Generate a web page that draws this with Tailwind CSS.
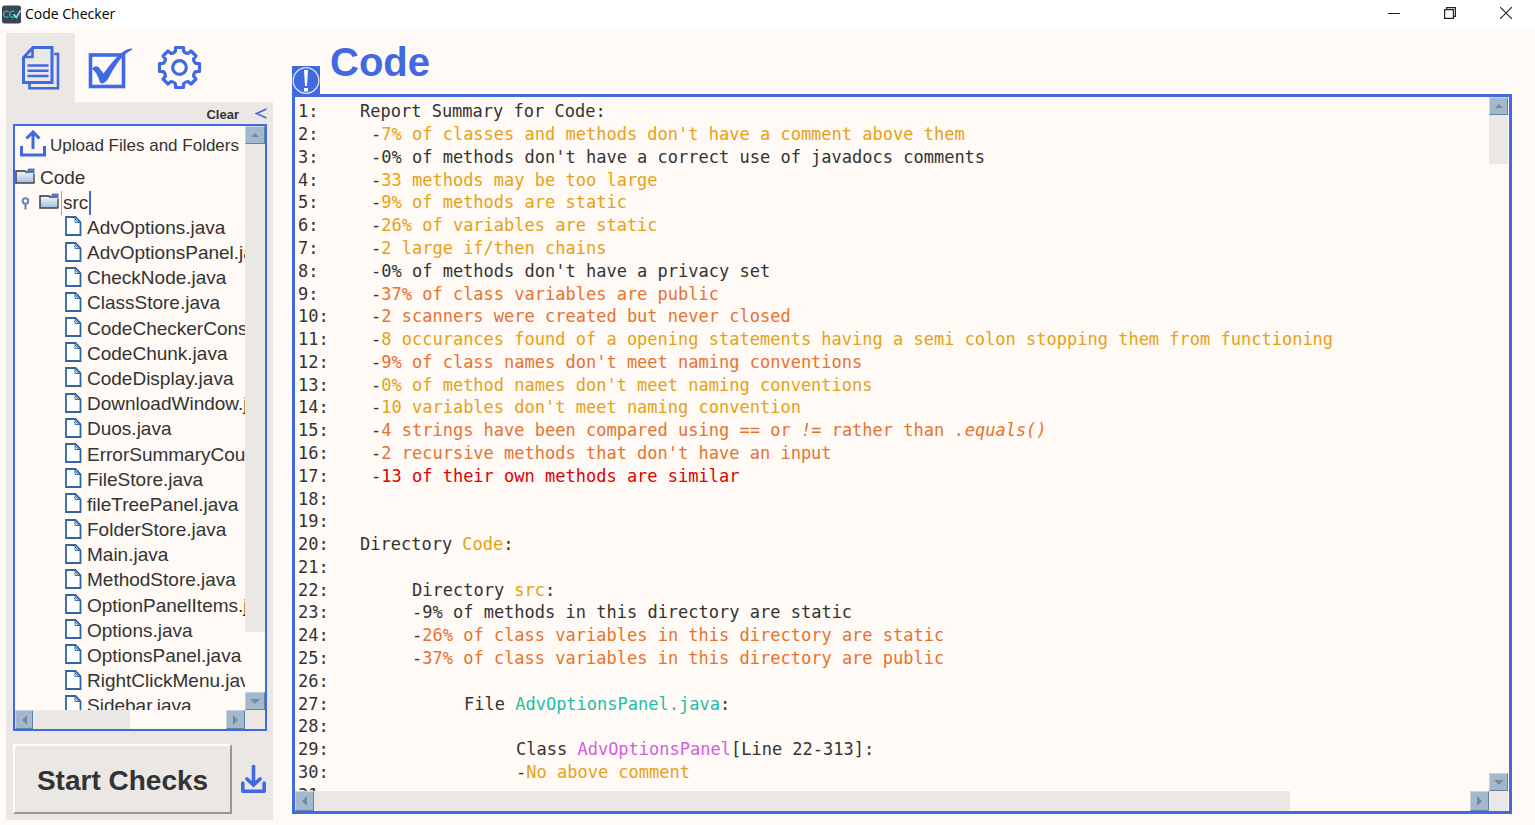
<!DOCTYPE html>
<html lang="en">
<head>
<meta charset="utf-8">
<title>Code Checker</title>
<script src="https://cdn.jsdelivr.net/npm/@tailwindcss/browser@4"></script>
</head>
<body class="h-screen flex flex-col overflow-hidden bg-[#fffaf5] text-[#333] font-['Liberation_Sans',Arial,sans-serif]">

<svg class="absolute size-0" aria-hidden="true">
  <defs>
    <linearGradient id="fold" x1="0" y1="0" x2="0" y2="1"><stop offset="0" stop-color="#f4f8fc"/><stop offset="1" stop-color="#a0bfe0"/></linearGradient>
    <symbol id="folder" viewBox="0 0 20 17">
      <path d="M1 3.500H10L12 5.500H18.500V15.500H1Z" fill="url(#fold)"/>
      <path d="M1 16V3.500H10L12 5.500" fill="none" stroke="#333" stroke-width="1.400"/>
      <path d="M.5 15.500H19M19 6V16" fill="none" stroke="#444" stroke-width="1.400"/>
      <path d="M11 4.500L13.500 1H19.500V5.500H11.500Z" fill="#5577b5"/>
    </symbol>
    <symbol id="file" viewBox="0 0 17 20">
      <path d="M1 1H10.500L15.500 6.500V19H1Z" fill="#fff" stroke="#2d66a3" stroke-width="1.800"/>
      <path d="M10 1V6.500H15.500M10 3L14 7M11 1L16 6" fill="none" stroke="#2d66a3" stroke-width=".9"/>
    </symbol>
  </defs>
</svg>

<header class="h-7 shrink-0 flex items-center bg-white text-black">
  <svg class="ml-[2px] size-[19px]" viewBox="0 0 19 19" fill="none">
    <rect width="19" height="18" y=".5" rx="2.500" fill="#3b4654"/>
    <path d="M6.500 6.800C4.500 5.300 1.500 6.500 1.500 9.200S4.500 13 6.500 11.700M12.500 6.500C10 5.300 7.500 6.800 7.500 9.200S10 13 12.300 12V9.500H10.500" stroke="#2bc4c4" stroke-width="1.200"/>
    <path d="M12 9.500L14.300 12.500L18.500 5.500" stroke="#7fe6ea" stroke-width="1.600"/>
  </svg>
  <h1 class="ml-1 text-sm font-['Open_Sans','Noto_Sans',sans-serif]">Code Checker</h1>
  <div class="ml-auto flex items-center gap-11 pr-[23px] pb-[2px]">
    <button aria-label="Minimize" class="size-3"><svg viewBox="0 0 12 12"><path d="M0 6.500H12" stroke="#222"/></svg></button>
    <button aria-label="Restore" class="size-3"><svg viewBox="0 0 12 12" fill="none" stroke="#222" stroke-width="1.200"><path d="M.6 2.600H9.400V11.400H.6ZM2.600 2.600V.6H11.400V9.400H9.400"/></svg></button>
    <button aria-label="Close" class="size-3"><svg viewBox="0 0 12 12"><path d="M0 0L12 12M12 0L0 12" stroke="#222" stroke-width="1.100"/></svg></button>
  </div>
</header>

<div class="flex-1 min-h-0 flex pt-[5px]">

  <aside class="ml-[6px] mb-[5px] w-[267px] shrink-0 flex flex-col">
    <nav class="h-[69px] shrink-0 flex">
      <button aria-label="Files" class="w-[69px] flex items-center justify-center bg-[#ebe7e4]">
        <svg class="w-[38px] h-[44px]" viewBox="0 0 38 44" fill="none" stroke="#4169e1">
          <path d="M11 1.500H30V36.500H1.500V11.500Z" stroke-width="3"/>
          <path d="M10.500 2V11H2" stroke-width="2.600"/>
          <path d="M32 8H36V42.200H7.500V38" stroke-width="2.600"/>
          <path d="M5.500 19.500H26.500M5.500 24.800H26.500M5.500 30H26.500" stroke-width="2.600"/>
        </svg>
      </button>
      <button aria-label="Checks" class="w-[69px] flex items-center justify-center">
        <svg class="w-[44px] h-[42px]" viewBox="0 0 44 42">
          <rect x="2.500" y="8" width="33" height="31.500" fill="none" stroke="#4169e1" stroke-width="3.600"/>
          <path d="M4 22Q7 17.500 11 20.500L15.500 26.500Q25 13 34 5.500Q39 1.500 44 1.500V2.800Q37 6 31 14Q25 22 20 32Q15 38.500 12 35.500Q9 25 4 22Z" fill="#4169e1"/>
        </svg>
      </button>
      <button aria-label="Settings" class="w-[71px] shrink-0 flex items-center justify-center">
        <svg class="size-[45px]" viewBox="-22.500 -22.500 45 45" fill="none" stroke="#4169e1" stroke-width="3.200" stroke-linejoin="round">
          <path d="M-4 -20H4V-16.500Q5 -14.500 8.500 -14L11.500 -16.500L16.500 -11.500L14 -8.500Q14.500 -5 16.500 -4H20V4H16.500Q14.500 5 14 8.500L16.500 11.500L11.500 16.500L8.500 14Q5 14.500 4 16.500V20H-4V16.500Q-5 14.500 -8.500 14L-11.500 16.500L-16.500 11.500L-14 8.500Q-14.500 5 -16.500 4H-20V-4H-16.500Q-14.500 -5 -14 -8.500L-16.500 -11.500L-11.500 -16.500L-8.500 -14Q-5 -14.500 -4 -16.500Z"/>
          <circle r="6.800"/>
        </svg>
      </button>
    </nav>

    <div class="flex-1 min-h-0 flex flex-col bg-[#ebe7e4] pl-[7px] pr-[6px] pb-[6px]">
      <div class="h-[22px] shrink-0 flex items-center justify-end gap-4">
        <button class="pt-1 text-[13px] font-bold">Clear</button>
        <button aria-label="Collapse" class="w-3"><svg viewBox="0 0 12 11"><path d="M11.500 1L1.500 5.500L11.500 10" fill="none" stroke="#4169e1" stroke-width="1.600"/></svg></button>
      </div>

      <div class="flex-1 min-h-0 grid grid-cols-[1fr_20px] grid-rows-[1fr_19px] border-2 border-[#4169e1] bg-[#fffaf5]">
        <div class="min-w-0 min-h-0 overflow-hidden">
          <button class="h-[39px] w-full flex items-center gap-1 pl-[5px] text-[17px] whitespace-nowrap">
            <svg class="w-[26px] h-[27px] shrink-0 -mt-1" viewBox="0 0 26 27" fill="none" stroke="#4169e1" stroke-width="3"><path d="M1.500 16V25H24.500V16M13 19V3M6.500 8.500L13 2L19.500 8.500"/></svg>
            Upload Files and Folders
          </button>
          <ul class="h-[554px] grid auto-rows-fr text-[19px] whitespace-nowrap *:flex *:items-center *:gap-[5px] *:min-h-0 *:leading-6 *:pl-[50px] [&_svg]:shrink-0 [&_svg]:self-start [&_svg]:mt-px">
            <li class="!pl-0"><svg class="w-5 h-5"><use href="#folder"/></svg>Code</li>
            <li class="!pl-[6px] !gap-0"><svg class="w-[9px] h-6 mr-[9px]" viewBox="0 0 9 12" fill="none" stroke="#6382bf" stroke-width="2"><circle cx="4.500" cy="4" r="2.800"/><path d="M4.500 7V12.500"/></svg><svg class="w-5 h-5 mr-[2px]"><use href="#folder"/></svg><span class="border-l border-r-2 border-l-[#8fa6ec] border-r-[#4169e1] px-px">src</span></li>
            <li><svg class="w-[17px] h-5"><use href="#file"/></svg>AdvOptions.java</li>
            <li><svg class="w-[17px] h-5"><use href="#file"/></svg>AdvOptionsPanel.java</li>
            <li><svg class="w-[17px] h-5"><use href="#file"/></svg>CheckNode.java</li>
            <li><svg class="w-[17px] h-5"><use href="#file"/></svg>ClassStore.java</li>
            <li><svg class="w-[17px] h-5"><use href="#file"/></svg>CodeCheckerConstants.java</li>
            <li><svg class="w-[17px] h-5"><use href="#file"/></svg>CodeChunk.java</li>
            <li><svg class="w-[17px] h-5"><use href="#file"/></svg>CodeDisplay.java</li>
            <li><svg class="w-[17px] h-5"><use href="#file"/></svg>DownloadWindow.java</li>
            <li><svg class="w-[17px] h-5"><use href="#file"/></svg>Duos.java</li>
            <li><svg class="w-[17px] h-5"><use href="#file"/></svg>ErrorSummaryCount.java</li>
            <li><svg class="w-[17px] h-5"><use href="#file"/></svg>FileStore.java</li>
            <li><svg class="w-[17px] h-5"><use href="#file"/></svg>fileTreePanel.java</li>
            <li><svg class="w-[17px] h-5"><use href="#file"/></svg>FolderStore.java</li>
            <li><svg class="w-[17px] h-5"><use href="#file"/></svg>Main.java</li>
            <li><svg class="w-[17px] h-5"><use href="#file"/></svg>MethodStore.java</li>
            <li><svg class="w-[17px] h-5"><use href="#file"/></svg>OptionPanelItems.java</li>
            <li><svg class="w-[17px] h-5"><use href="#file"/></svg>Options.java</li>
            <li><svg class="w-[17px] h-5"><use href="#file"/></svg>OptionsPanel.java</li>
            <li><svg class="w-[17px] h-5"><use href="#file"/></svg>RightClickMenu.java</li>
            <li><svg class="w-[17px] h-5"><use href="#file"/></svg>Sidebar.java</li>
          </ul>
        </div>
        <div class="flex flex-col">
          <button aria-label="Scroll up" class="h-[18px] flex items-center justify-center bg-[#a3b8cc] border border-t-[#c5d4e2] border-l-[#c5d4e2] border-r-[#6382a8] border-b-[#6382a8]"><svg class="w-2" viewBox="0 0 8 4"><path d="M0 4L4 0L8 4Z" fill="#75899c"/></svg></button>
          <div class="h-[488px] bg-[#ebe7e4]"></div>
          <button aria-label="Scroll down" class="mt-auto h-[18px] flex items-center justify-center bg-[#a3b8cc] border border-t-[#c5d4e2] border-l-[#c5d4e2] border-r-[#6382a8] border-b-[#6382a8]"><svg class="w-[10px]" viewBox="0 0 10 5"><path d="M0 0L5 5L10 0Z" fill="#75899c"/></svg></button>
        </div>
        <div class="flex">
          <button aria-label="Scroll left" class="w-[18px] flex items-center justify-center bg-[#a3b8cc] border border-t-[#c5d4e2] border-l-[#c5d4e2] border-r-[#6382a8] border-b-[#6382a8]"><svg class="w-[5px]" viewBox="0 0 5 10"><path d="M5 0L0 5L5 10Z" fill="#75899c"/></svg></button>
          <div class="w-[97px] bg-[#ebe7e4]"></div>
          <button aria-label="Scroll right" class="ml-auto w-[19px] flex items-center justify-center bg-[#a3b8cc] border border-t-[#c5d4e2] border-l-[#c5d4e2] border-r-[#6382a8] border-b-[#6382a8]"><svg class="w-[5px]" viewBox="0 0 5 10"><path d="M0 0L5 5L0 10Z" fill="#75899c"/></svg></button>
        </div>
        <div class="bg-[#ebe7e4]"></div>
      </div>

      <div class="mt-[13px] h-[70px] shrink-0 flex items-center gap-[9px]">
        <button class="w-[219px] h-full border-2 border-t-white border-l-white border-r-[#9a9795] border-b-[#9a9795] pt-1 text-[28px] font-bold">Start Checks</button>
        <button aria-label="Download report" class="w-[25px]"><svg viewBox="0 0 25 28" fill="none" stroke="#4169e1" stroke-width="3.600"><path d="M1.800 18V26.200H23.200V18" stroke-linejoin="round" stroke-linecap="round"/><path d="M12.500 1V20M6 14L12.500 20L19 14" stroke-linecap="round"/></svg></button>
      </div>
    </div>
  </aside>

  <main class="ml-[19px] mr-[23px] mb-[11px] flex-1 min-w-0 flex flex-col">
    <div class="h-[61px] shrink-0 flex">
      <svg class="w-7 h-7 self-end" viewBox="0 0 28 28">
        <rect width="28" height="28" fill="#4169e1"/>
        <circle cx="14" cy="14.500" r="12.800" fill="none" stroke="#dfe6fb" stroke-width="1.300"/>
        <path d="M12 4H16L15 20H13ZM12 22H16V25.500H12Z" fill="#fff"/>
      </svg>
      <h2 class="ml-[10px] pt-[9px] text-[40px] leading-10 font-bold text-[#4169e1]">Code</h2>
    </div>
    <div class="flex-1 min-h-0 grid grid-cols-[1fr_20px] grid-rows-[1fr_20px] border-3 border-[#4169e1]">
      <div class="min-w-0 min-h-0 overflow-hidden pt-[3px] pl-[3px]">
        <ol class="h-[706px] grid auto-rows-fr font-['DejaVu_Sans_Mono','Liberation_Mono',monospace] text-[17px] leading-5 whitespace-pre *:flex *:items-center *:min-h-0 [&>li>span]:w-[62px] [&>li>span]:shrink-0">
          <li><span>1:</span><p>Report Summary for Code:</p></li>
          <li><span>2:</span><p class="pl-[11px]">-<b class="font-normal text-[#e6a117]">7% of classes and methods don't have a comment above them</b></p></li>
          <li><span>3:</span><p class="pl-[11px]">-0% of methods don't have a correct use of javadocs comments</p></li>
          <li><span>4:</span><p class="pl-[11px]">-<b class="font-normal text-[#e6a117]">33 methods may be too large</b></p></li>
          <li><span>5:</span><p class="pl-[11px]">-<b class="font-normal text-[#e6a117]">9% of methods are static</b></p></li>
          <li><span>6:</span><p class="pl-[11px]">-<b class="font-normal text-[#e6a117]">26% of variables are static</b></p></li>
          <li><span>7:</span><p class="pl-[11px]">-<b class="font-normal text-[#e6a117]">2 large if/then chains</b></p></li>
          <li><span>8:</span><p class="pl-[11px]">-0% of methods don't have a privacy set</p></li>
          <li><span>9:</span><p class="pl-[11px]">-<b class="font-normal text-[#e57332]">37% of class variables are public</b></p></li>
          <li><span>10:</span><p class="pl-[11px]">-<b class="font-normal text-[#e57332]">2 scanners were created but never closed</b></p></li>
          <li><span>11:</span><p class="pl-[11px]">-<b class="font-normal text-[#e6a117]">8 occurances found of a opening statements having a semi colon stopping them from functioning</b></p></li>
          <li><span>12:</span><p class="pl-[11px]">-<b class="font-normal text-[#e57332]">9% of class names don't meet naming conventions</b></p></li>
          <li><span>13:</span><p class="pl-[11px]">-<b class="font-normal text-[#e6a117]">0% of method names don't meet naming conventions</b></p></li>
          <li><span>14:</span><p class="pl-[11px]">-<b class="font-normal text-[#e6a117]">10 variables don't meet naming convention</b></p></li>
          <li><span>15:</span><p class="pl-[11px]">-<b class="font-normal text-[#e57332]">4 strings have been compared using <i>==</i> or <i>!=</i> rather than <i>.equals()</i></b></p></li>
          <li><span>16:</span><p class="pl-[11px]">-<b class="font-normal text-[#e57332]">2 recursive methods that don't have an input</b></p></li>
          <li><span>17:</span><p class="pl-[11px]">-<b class="font-normal text-[#e00000]">13 of their own methods are similar</b></p></li>
          <li><span>18:</span></li>
          <li><span>19:</span></li>
          <li><span>20:</span><p>Directory <b class="font-normal text-[#e6a117]">Code</b>:</p></li>
          <li><span>21:</span></li>
          <li><span>22:</span><p class="pl-[52px]">Directory <b class="font-normal text-[#e6a117]">src</b>:</p></li>
          <li><span>23:</span><p class="pl-[52px]">-9% of methods in this directory are static</p></li>
          <li><span>24:</span><p class="pl-[52px]">-<b class="font-normal text-[#e57332]">26% of class variables in this directory are static</b></p></li>
          <li><span>25:</span><p class="pl-[52px]">-<b class="font-normal text-[#e57332]">37% of class variables in this directory are public</b></p></li>
          <li><span>26:</span></li>
          <li><span>27:</span><p class="pl-[104px]">File <b class="font-normal text-[#1bbfa9]">AdvOptionsPanel.java</b>:</p></li>
          <li><span>28:</span></li>
          <li><span>29:</span><p class="pl-[156px]">Class <b class="font-normal text-[#d15fdc]">AdvOptionsPanel</b>[Line 22-313]:</p></li>
          <li><span>30:</span><p class="pl-[156px]">-<b class="font-normal text-[#e6a117]">No above comment</b></p></li>
          <li><span>31:</span></li>
        </ol>
      </div>
      <div class="flex flex-col pr-px">
        <button aria-label="Scroll up" class="h-[18px] flex items-center justify-center bg-[#a3b8cc] border border-t-[#c5d4e2] border-l-[#c5d4e2] border-r-[#6382a8] border-b-[#6382a8]"><svg class="w-2" viewBox="0 0 8 4"><path d="M0 4L4 0L8 4Z" fill="#75899c"/></svg></button>
        <div class="h-[49px] bg-[#ebe7e4]"></div>
        <button aria-label="Scroll down" class="mt-auto h-[18px] flex items-center justify-center bg-[#a3b8cc] border border-t-[#c5d4e2] border-l-[#c5d4e2] border-r-[#6382a8] border-b-[#6382a8]"><svg class="w-[10px]" viewBox="0 0 10 5"><path d="M0 0L5 5L10 0Z" fill="#75899c"/></svg></button>
      </div>
      <div class="flex">
        <button aria-label="Scroll left" class="w-[19px] flex items-center justify-center bg-[#a3b8cc] border border-t-[#c5d4e2] border-l-[#c5d4e2] border-r-[#6382a8] border-b-[#6382a8]"><svg class="w-[5px]" viewBox="0 0 5 10"><path d="M5 0L0 5L5 10Z" fill="#75899c"/></svg></button>
        <div class="mr-[180px] flex-1 bg-[#ebe7e4]"></div>
        <button aria-label="Scroll right" class="w-[19px] flex items-center justify-center bg-[#a3b8cc] border border-t-[#c5d4e2] border-l-[#c5d4e2] border-r-[#6382a8] border-b-[#6382a8]"><svg class="w-[5px]" viewBox="0 0 5 10"><path d="M0 0L5 5L0 10Z" fill="#75899c"/></svg></button>
      </div>
      <div class="bg-[#ebe7e4] mr-px"></div>
    </div>
  </main>
</div>
</body>
</html>
